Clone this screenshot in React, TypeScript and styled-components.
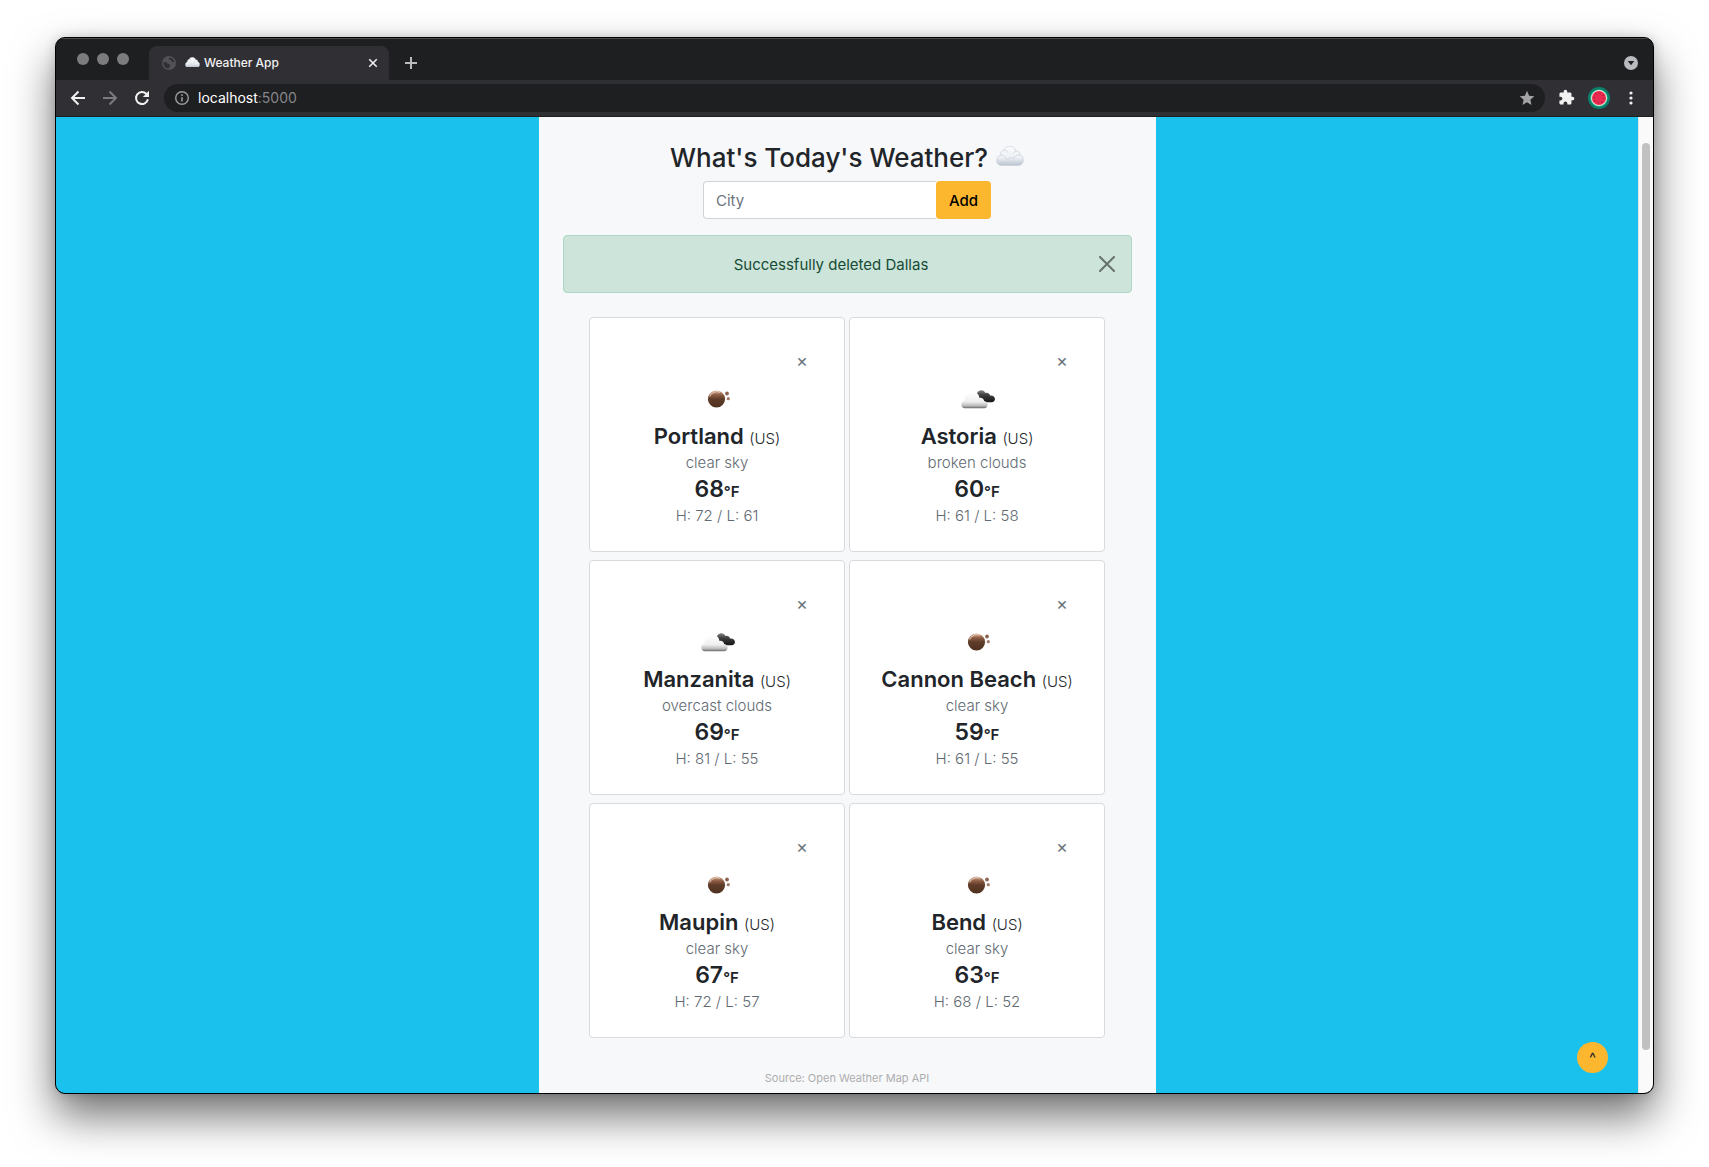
import React, { useState } from "react";
import styled, { createGlobalStyle } from "styled-components";

const GlobalStyle = createGlobalStyle`
  *, *::before, *::after { box-sizing: border-box; }
  body {
    margin: 0;
    background: #ffffff;
    color: #212529;
    font-family: Inter, "Liberation Sans", sans-serif;
    font-size: 15px;
  }
  button, input { font: inherit; }
`;

/* ---------- browser window ---------- */

const Desktop = styled.div`
  display: flex;
  min-height: 100vh;
  padding: 37px 55px 73px;
  overflow: hidden;
`;

const BrowserWindow = styled.div`
  flex: 1;
  min-width: 0;
  display: flex;
  flex-direction: column;
  border: 1px solid #000000;
  border-radius: 10px;
  overflow: hidden;
  background: #1e1f21;
  box-shadow: 0 22px 44px rgba(0, 0, 0, 0.56), 0 0 12px rgba(0, 0, 0, 0.16);
`;

const TabStrip = styled.div`
  display: flex;
  align-items: flex-end;
  height: 42px;
  padding: 0 15px 0 21px;
  border-top: 1px solid #4c4d4f;
  background: #1e1f21;
`;

const TrafficLights = styled.div`
  display: flex;
  align-self: center;
  gap: 8px;
  width: 72px;
  padding-bottom: 2px;
`;

const Light = styled.span`
  width: 12px;
  height: 12px;
  border-radius: 50%;
  background: #7c7c7e;
`;

const Tab = styled.div`
  display: flex;
  align-items: center;
  gap: 9px;
  width: 240px;
  height: 34px;
  padding: 0 10px 0 13px;
  border-radius: 8px 8px 0 0;
  background: #302f33;
  color: #f3f3f4;
`;

const TabTitle = styled.span`
  flex: 1;
  display: flex;
  align-items: center;
  gap: 4px;
  padding-bottom: 2px;
  font-size: 12px;
  font-weight: 500;
  white-space: nowrap;
`;

const BarButton = styled.button<{ $size: number }>`
  display: flex;
  align-items: center;
  justify-content: center;
  width: ${(p) => p.$size}px;
  height: ${(p) => p.$size}px;
  padding: 0;
  border: 0;
  background: none;
  color: inherit;
  cursor: pointer;
`;

const StripEnd = styled.div`
  flex: 1;
  display: flex;
  align-items: center;
  justify-content: space-between;
  height: 34px;
  padding-left: 14px;
  color: #b9bbbe;
`;

const Toolbar = styled.div`
  display: flex;
  align-items: center;
  height: 37px;
  padding: 0 14px 1px 14px;
  border-bottom: 1px solid #1e1f21;
  background: #302f33;
  color: #f1f1f2;
`;

const NavButtons = styled.div`
  display: flex;
  gap: 16px;
  margin-right: 14px;
`;

const Omnibox = styled.div`
  flex: 1;
  display: flex;
  align-items: center;
  gap: 8px;
  height: 28px;
  padding: 0 10px;
  border-radius: 14px;
  background: #1e1f21;
  color: #9b9ca0;
`;

const Address = styled.span`
  flex: 1;
  font-size: 14px;
  color: #85868a;
`;

const Host = styled.span`
  color: #ffffff;
`;

const Actions = styled.div`
  display: flex;
  align-items: center;
  gap: 13px;
  margin-left: 13px;
`;

/* ---------- page ---------- */

const Viewport = styled.div`
  position: relative;
  flex: 1;
  display: grid;
  grid-template-columns: minmax(0, 1fr) 15px;
`;

const Page = styled.div`
  display: flex;
  justify-content: center;
  background: #1bc1ed;
`;

const ScrollTrack = styled.div`
  display: flex;
  justify-content: center;
  padding: 26px 0 43px;
  border-left: 1px solid #e6e6e6;
  background: #fafafa;
`;

const ScrollThumb = styled.div`
  width: 8px;
  border-radius: 4px;
  background: #c1c1c1;
`;

const Panel = styled.main`
  display: flex;
  flex-direction: column;
  align-items: center;
  width: 100%;
  max-width: 617px;
  padding: 24px 24px 6px;
  background: #f7f8fa;
`;

const Heading = styled.h1`
  display: flex;
  align-items: center;
  gap: 8px;
  margin: 0 0 6px;
  font-size: 26px;
  line-height: 34px;
  font-weight: 500;
`;

const HeadingIcon = styled.span`
  display: flex;
  padding-bottom: 4px;
`;

const CityForm = styled.form`
  display: flex;
  height: 38px;
  margin-bottom: 16px;
`;

const CityInput = styled.input`
  width: 233px;
  padding: 0 12px;
  border: 1px solid #ced4da;
  border-right: 0;
  border-radius: 4px 0 0 4px;
  background: #ffffff;
  color: #212529;
  &::placeholder {
    color: #6c757d;
    opacity: 1;
  }
`;

const AddButton = styled.button`
  width: 55px;
  padding: 0;
  border: 0;
  border-radius: 4px;
  background: #fdb72f;
  color: #000000;
  font-weight: 500;
  cursor: pointer;
`;

const Alert = styled.div`
  align-self: stretch;
  display: flex;
  align-items: center;
  gap: 16px;
  height: 58px;
  margin-bottom: 24px;
  padding: 0 16px;
  border: 1px solid #acd7c4;
  border-radius: 4px;
  background: #cce4d9;
  color: #164c36;
  text-align: center;
`;

const AlertText = styled.span`
  flex: 1;
`;

const Cards = styled.section`
  display: grid;
  grid-template-columns: repeat(2, 256px);
  gap: 8px 4px;
`;

const Card = styled.article`
  display: flex;
  flex-direction: column;
  align-items: center;
  height: 235px;
  padding: 31px 32px;
  border: 1px solid #d8dadd;
  border-radius: 4px;
  background: #ffffff;
`;

const DeleteButton = styled.button`
  align-self: flex-end;
  width: 20px;
  height: 24px;
  padding: 0;
  border: 0;
  background: none;
  color: #6c757d;
  font-size: 18px;
  line-height: 24px;
  cursor: pointer;
`;

const CardIcon = styled.div`
  display: flex;
  align-items: center;
  height: 24px;
  margin: 14px 0 11px;
`;

const City = styled.h2`
  margin: 0;
  font-size: 22px;
  line-height: 29px;
  font-weight: 600;
  white-space: nowrap;
`;

const Country = styled.span`
  font-size: 15px;
  line-height: 1;
  font-weight: 300;
`;

const Detail = styled.p`
  margin: 0;
  font-size: 15px;
  line-height: 24px;
  font-weight: 300;
  color: #616a72;
`;

const Temperature = styled.p`
  margin: 0;
  font-size: 23px;
  line-height: 29px;
  font-weight: 600;
`;

const Unit = styled.span`
  font-size: 15px;
  line-height: 1;
`;

const Source = styled.footer`
  margin-top: 32px;
  font-size: 11px;
  line-height: 16px;
  color: #adadad;
`;

const TopButton = styled.button`
  position: absolute;
  right: 45px;
  bottom: 20px;
  width: 31px;
  height: 31px;
  padding: 0;
  border: 0;
  border-radius: 50%;
  background: #fdb72f;
  color: #212529;
  cursor: pointer;
`;

/* ---------- drawings ---------- */

const CloudIcon = ({ width, id }: { width: number; id: string }) => (
  <svg width={width} height={(width * 20) / 28} viewBox="0 0 28 20" aria-hidden="true">
    <defs>
      <linearGradient id={id} x1="0" y1="0" x2="0" y2="1">
        <stop offset="0" stopColor="#fbfcfd" />
        <stop offset="0.6" stopColor="#edf0f4" />
        <stop offset="1" stopColor="#b9c2ce" />
      </linearGradient>
    </defs>
    <path
      d="M6 19.500C2.800 19.500 .7 17.400 .7 14.400C.7 11.700 2.300 9.700 4.600 9.200C4.100 6.600 5.600 4.500 8 4.300C8.900 1.800 11 .4 13.600 .4C16.800 .4 19.200 2.300 20 5.200C22.400 4.800 24.100 6.400 24 9C26.100 9.800 27.300 11.600 27.300 14.100C27.300 17.300 25.300 19.500 22 19.500Z"
      fill={`url(#${id})`}
      stroke="#c9d0d9"
      strokeWidth="0.7"
    />
    <path
      d="M8 4.300C10 4 11.500 5 11.900 6.500M20 5.200C18.600 5.400 17.900 6.200 17.700 7.300M4.600 9.200C7 8.400 8.800 9.800 9.300 11.800C10.800 13.600 13.500 13.100 14.200 11C15.500 12.400 18.500 12.300 19.500 10.300C20.500 8.900 22.300 8.400 24 9"
      fill="none"
      stroke="#ccd3db"
      strokeWidth="0.8"
    />
  </svg>
);

const ClearSkyIcon = () => (
  <svg width="36" height="24" viewBox="0 0 36 24" aria-label="clear sky">
    <defs>
      <linearGradient id="moon" x1="0" y1="0" x2="0" y2="1">
        <stop offset="0" stopColor="#d6a98f" />
        <stop offset="0.28" stopColor="#8a5a40" />
        <stop offset="0.5" stopColor="#5f3c2a" />
        <stop offset="1" stopColor="#50301f" />
      </linearGradient>
    </defs>
    <circle cx="17.500" cy="12" r="8.600" fill="url(#moon)" />
    <path d="M10.600 9.500A8 8 0 0 1 21 5.300" fill="none" stroke="#f0d9cc" strokeWidth="1.300" opacity="0.7" />
    <circle cx="28" cy="6.500" r="1.900" fill="#8b6350" />
    <circle cx="29.300" cy="11.700" r="1.600" fill="#a07a68" />
  </svg>
);

const CloudsIcon = () => (
  <svg width="36" height="24" viewBox="0 0 36 24" aria-label="clouds">
    <defs>
      <linearGradient id="front" x1="0" y1="0" x2="0" y2="1">
        <stop offset="0" stopColor="#ffffff" />
        <stop offset="0.6" stopColor="#efefef" />
        <stop offset="0.86" stopColor="#b8b8b8" />
        <stop offset="1" stopColor="#666666" />
      </linearGradient>
      <linearGradient id="back" x1="0" y1="0" x2="0" y2="1">
        <stop offset="0" stopColor="#858585" />
        <stop offset="0.4" stopColor="#3f3f3f" />
        <stop offset="1" stopColor="#161616" />
      </linearGradient>
    </defs>
    <path
      d="M17 9C17.600 5.500 19.600 3.200 22.300 3.200C24.300 3.200 25.800 4.400 26.400 6.100C28.500 5.300 30.400 6.200 31 8.500C33.700 8 36 9.600 36 12C36 14 34.500 15.200 32.700 15.200H26Z"
      fill="url(#back)"
    />
    <path
      d="M6 21.200C3.800 21.200 2.300 19.600 2.300 17.500C2.300 15.300 3.800 13.700 5.700 13.300C5.300 10.200 6.900 7.900 9.500 7.700C10.400 5.900 12.200 5 14.400 5C17.600 5 20.200 7.500 20.300 10.800C23 10.300 25 11.700 25.100 14C27.400 14.300 28.700 15.900 28.600 17.800C28.500 19.800 27.200 21.200 25.300 21.200Z"
      fill="url(#front)"
    />
  </svg>
);

const GlobeIcon = () => (
  <svg width="14" height="14" viewBox="0 0 14 14" aria-hidden="true">
    <circle cx="7" cy="7" r="7" fill="#515256" />
    <path
      d="M1.500 6.300C3 5.600 4.500 6.300 5.500 7.500C6.500 8.300 8.300 7.800 8.200 9.400C8 10.600 6.800 10.700 6.800 12.600C3.800 12.600 1.200 10 1.500 6.300ZM7.200 1.700C6.200 3 7.500 3.900 8.800 4C9.800 4.300 9.500 5.800 11 6.200L12.400 6C12 3.500 9.800 1.600 7.200 1.700Z"
      fill="#302f33"
    />
  </svg>
);

const StrokeIcon = ({ d, size, width = 2 }: { d: string; size: number; width?: number }) => (
  <svg width={size} height={size} viewBox="0 0 16 16" fill="none" stroke="currentColor" strokeWidth={width} aria-hidden="true">
    <path d={d} />
  </svg>
);

const ReloadIcon = () => (
  <svg width="16" height="16" viewBox="0 0 16 16" aria-hidden="true">
    <path d="M13.900 9.200A6 6 0 1 1 12.300 3.800L13.400 5" fill="none" stroke="currentColor" strokeWidth="2" />
    <path d="M15 .8V7H8.800Z" fill="currentColor" />
  </svg>
);

const InfoIcon = () => (
  <svg width="16" height="16" viewBox="0 0 16 16" aria-hidden="true">
    <circle cx="8" cy="8" r="6.300" fill="none" stroke="currentColor" strokeWidth="1.400" />
    <path d="M7.200 7.200H8.800V11.600H7.200ZM7.200 4.300H8.800V5.900H7.200Z" fill="currentColor" />
  </svg>
);

const StarIcon = () => (
  <svg width="16" height="16" viewBox="0 0 16 16" aria-hidden="true">
    <path d="M8 .8L10.100 5.700L15.300 6.200L11.400 9.700L12.500 14.900L8 12.200L3.500 14.900L4.600 9.700L.7 6.200L5.900 5.700Z" fill="#a3a3a5" />
  </svg>
);

const PuzzleIcon = () => (
  <svg width="17" height="17" viewBox="0 0 24 24" aria-hidden="true">
    <path
      d="M20.500 11H19V7c0-1.100-.9-2-2-2h-4V3.500C13 2.120 11.880 1 10.500 1S8 2.120 8 3.500V5H4c-1.100 0-1.990.9-1.990 2v3.800H3.500c1.490 0 2.700 1.210 2.700 2.700s-1.210 2.700-2.700 2.700H2V20c0 1.100.9 2 2 2h3.800v-1.500c0-1.490 1.210-2.700 2.700-2.700 1.490 0 2.700 1.210 2.700 2.700V22H17c1.100 0 2-.9 2-2v-4h1.500c1.380 0 2.500-1.120 2.500-2.500S21.880 11 20.500 11z"
      fill="currentColor"
    />
  </svg>
);

const MelonAvatar = () => (
  <svg width="22" height="22" viewBox="0 0 22 22" aria-hidden="true">
    <circle cx="11" cy="11" r="11" fill="#0b7f6c" />
    <circle cx="11" cy="11" r="8.600" fill="#3dcf9f" />
    <circle cx="11" cy="11" r="7.900" fill="#f7e6d8" />
    <circle cx="11" cy="11" r="7" fill="#ec2a50" />
    <circle cx="11" cy="11" r="5" fill="none" stroke="#8c1f3c" strokeWidth="1.100" strokeDasharray="1.100 2.800" />
  </svg>
);

const DotsIcon = () => (
  <svg width="16" height="16" viewBox="0 0 16 16" aria-hidden="true">
    <g fill="currentColor">
      <circle cx="8" cy="3" r="1.600" />
      <circle cx="8" cy="8" r="1.600" />
      <circle cx="8" cy="13" r="1.600" />
    </g>
  </svg>
);

const TabSearchIcon = () => (
  <svg width="14" height="14" viewBox="0 0 14 14" aria-hidden="true">
    <circle cx="7" cy="7" r="7" fill="#b9bbbe" />
    <path d="M3.800 5H10.200L7 9.300Z" fill="#1e1f21" />
  </svg>
);

/* ---------- data ---------- */

type Weather = { city: string; sky: string; temp: number; high: number; low: number };

const cities: Weather[] = [
  { city: "Portland", sky: "clear sky", temp: 68, high: 72, low: 61 },
  { city: "Astoria", sky: "broken clouds", temp: 60, high: 61, low: 58 },
  { city: "Manzanita", sky: "overcast clouds", temp: 69, high: 81, low: 55 },
  { city: "Cannon Beach", sky: "clear sky", temp: 59, high: 61, low: 55 },
  { city: "Maupin", sky: "clear sky", temp: 67, high: 72, low: 57 },
  { city: "Bend", sky: "clear sky", temp: 63, high: 68, low: 52 },
];

const WeatherCard = ({ item }: { item: Weather }) => (
  <Card>
    <DeleteButton type="button" aria-label={`Delete ${item.city}`}>×</DeleteButton>
    <CardIcon>{item.sky === "clear sky" ? <ClearSkyIcon /> : <CloudsIcon />}</CardIcon>
    <City>
      {item.city} <Country>(US)</Country>
    </City>
    <Detail>{item.sky}</Detail>
    <Temperature>
      {item.temp}
      <Unit>°F</Unit>
    </Temperature>
    <Detail>
      H: {item.high} / L: {item.low}
    </Detail>
  </Card>
);

export default function App() {
  const [city, setCity] = useState("");
  return (
    <>
      <GlobalStyle />
      <Desktop>
        <BrowserWindow>
          <TabStrip>
            <TrafficLights>
              <Light />
              <Light />
              <Light />
            </TrafficLights>
            <Tab>
              <GlobeIcon />
              <TabTitle>
                <CloudIcon width={15} id="tab-cloud" />
                Weather App
              </TabTitle>
              <BarButton $size={12} aria-label="Close tab">
                <StrokeIcon size={12} d="M3 3L13 13M13 3L3 13" />
              </BarButton>
            </Tab>
            <StripEnd>
              <BarButton $size={16} aria-label="New tab">
                <StrokeIcon size={16} d="M8 2V14M2 8H14" />
              </BarButton>
              <BarButton $size={14} aria-label="Search tabs">
                <TabSearchIcon />
              </BarButton>
            </StripEnd>
          </TabStrip>
          <Toolbar>
            <NavButtons>
              <BarButton $size={16} aria-label="Back">
                <StrokeIcon size={16} d="M15 8H2.500M8.500 1.500L2 8L8.500 14.500" />
              </BarButton>
              <BarButton $size={16} aria-label="Forward">
                <svg width="16" height="16" viewBox="0 0 16 16" fill="none" stroke="#7b7b7e" strokeWidth="2">
                  <path d="M1 8H13.500M7.500 1.500L14 8L7.500 14.500" />
                </svg>
              </BarButton>
              <BarButton $size={16} aria-label="Reload">
                <ReloadIcon />
              </BarButton>
            </NavButtons>
            <Omnibox>
              <InfoIcon />
              <Address>
                <Host>localhost</Host>:5000
              </Address>
              <BarButton $size={16} aria-label="Bookmark">
                <StarIcon />
              </BarButton>
            </Omnibox>
            <Actions>
              <BarButton $size={17} aria-label="Extensions">
                <PuzzleIcon />
              </BarButton>
              <BarButton $size={22} aria-label="Profile">
                <MelonAvatar />
              </BarButton>
              <BarButton $size={16} aria-label="Menu">
                <DotsIcon />
              </BarButton>
            </Actions>
          </Toolbar>
          <Viewport>
            <Page>
              <Panel>
                <Heading>
                  What's Today's Weather?
                  <HeadingIcon>
                    <CloudIcon width={28} id="title-cloud" />
                  </HeadingIcon>
                </Heading>
                <CityForm onSubmit={(e) => e.preventDefault()}>
                  <CityInput
                    aria-label="City"
                    placeholder="City"
                    value={city}
                    onChange={(e) => setCity(e.target.value)}
                  />
                  <AddButton type="submit">Add</AddButton>
                </CityForm>
                <Alert role="alert">
                  <AlertText>Successfully deleted Dallas</AlertText>
                  <BarButton $size={16} aria-label="Close">
                    <svg width="16" height="16" viewBox="0 0 16 16" stroke="#66726d" strokeWidth="2" strokeLinecap="round">
                      <path d="M1 1L15 15M15 1L1 15" />
                    </svg>
                  </BarButton>
                </Alert>
                <Cards>
                  {cities.map((item) => (
                    <WeatherCard key={item.city} item={item} />
                  ))}
                </Cards>
                <Source>Source: Open Weather Map API</Source>
              </Panel>
            </Page>
            <ScrollTrack>
              <ScrollThumb />
            </ScrollTrack>
            <TopButton type="button" aria-label="Back to top">^</TopButton>
          </Viewport>
        </BrowserWindow>
      </Desktop>
    </>
  );
}
